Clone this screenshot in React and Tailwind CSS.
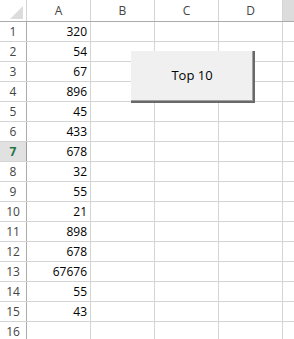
import React from 'react';

const values = [320, 54, 67, 896, 45, 433, 678, 32, 55, 21, 898, 678, 67676, 55, 43, null];
const cols = ['A', 'B', 'C', 'D'];

const App = () => {
    return (
        <div
            className="relative w-[294px] h-[339px] overflow-hidden bg-white text-[12px]"
            style={{ fontFamily: '"Open Sans", "Liberation Sans", sans-serif' }}
        >
            {/* Header row */}
            <div className="flex h-[22px] border-b border-[#ababab]">
                <div className="w-[27px] shrink-0 border-r border-[#d4d4d4] flex items-end justify-end pr-[2px] pb-[2px]">
                    <svg width="14" height="13" viewBox="0 0 14 13">
                        <polygon points="13,0 13,13 0,13" fill="#dcdcdc" />
                    </svg>
                </div>
                {cols.map((c) => (
                    <div
                        key={c}
                        className="w-[64px] shrink-0 border-r border-[#d4d4d4] flex items-center justify-center text-[#444]"
                    >
                        {c}
                    </div>
                ))}
                <div className="flex-1 bg-[#dcdcdc]" />
            </div>

            {/* Data rows */}
            {values.map((v, i) => {
                const active = i === 6;
                return (
                    <div key={i} className="flex h-[20px] border-b border-[#d4d4d4]">
                        <div
                            className={
                                active
                                    ? 'w-[27px] shrink-0 border-r border-[#9b9b9b] bg-[#e1e1e1] flex items-center justify-center font-bold text-[#217346]'
                                    : 'w-[27px] shrink-0 border-r border-[#ababab] flex items-center justify-center text-[#444]'
                            }
                        >
                            {i + 1}
                        </div>
                        <div className="w-[64px] shrink-0 border-r border-[#d4d4d4] flex items-center justify-end pr-[3px] text-black">
                            {v}
                        </div>
                        <div className="w-[64px] shrink-0 border-r border-[#d4d4d4]" />
                        <div className="w-[64px] shrink-0 border-r border-[#d4d4d4]" />
                        <div className="w-[64px] shrink-0 border-r border-[#d4d4d4]" />
                        <div className="flex-1" />
                    </div>
                );
            })}

            {/* Form button */}
            <div className="absolute left-[131px] top-[51px] w-[124px] h-[52px] bg-[#f0f0f0] border-r-2 border-b-2 border-[#696969] flex items-center justify-center text-[13px] text-black">
                <div className="absolute inset-0 border-r border-b border-[#a0a0a0]" />
                <span className="relative">Top 10</span>
            </div>
        </div>
    );
};

export default App;
